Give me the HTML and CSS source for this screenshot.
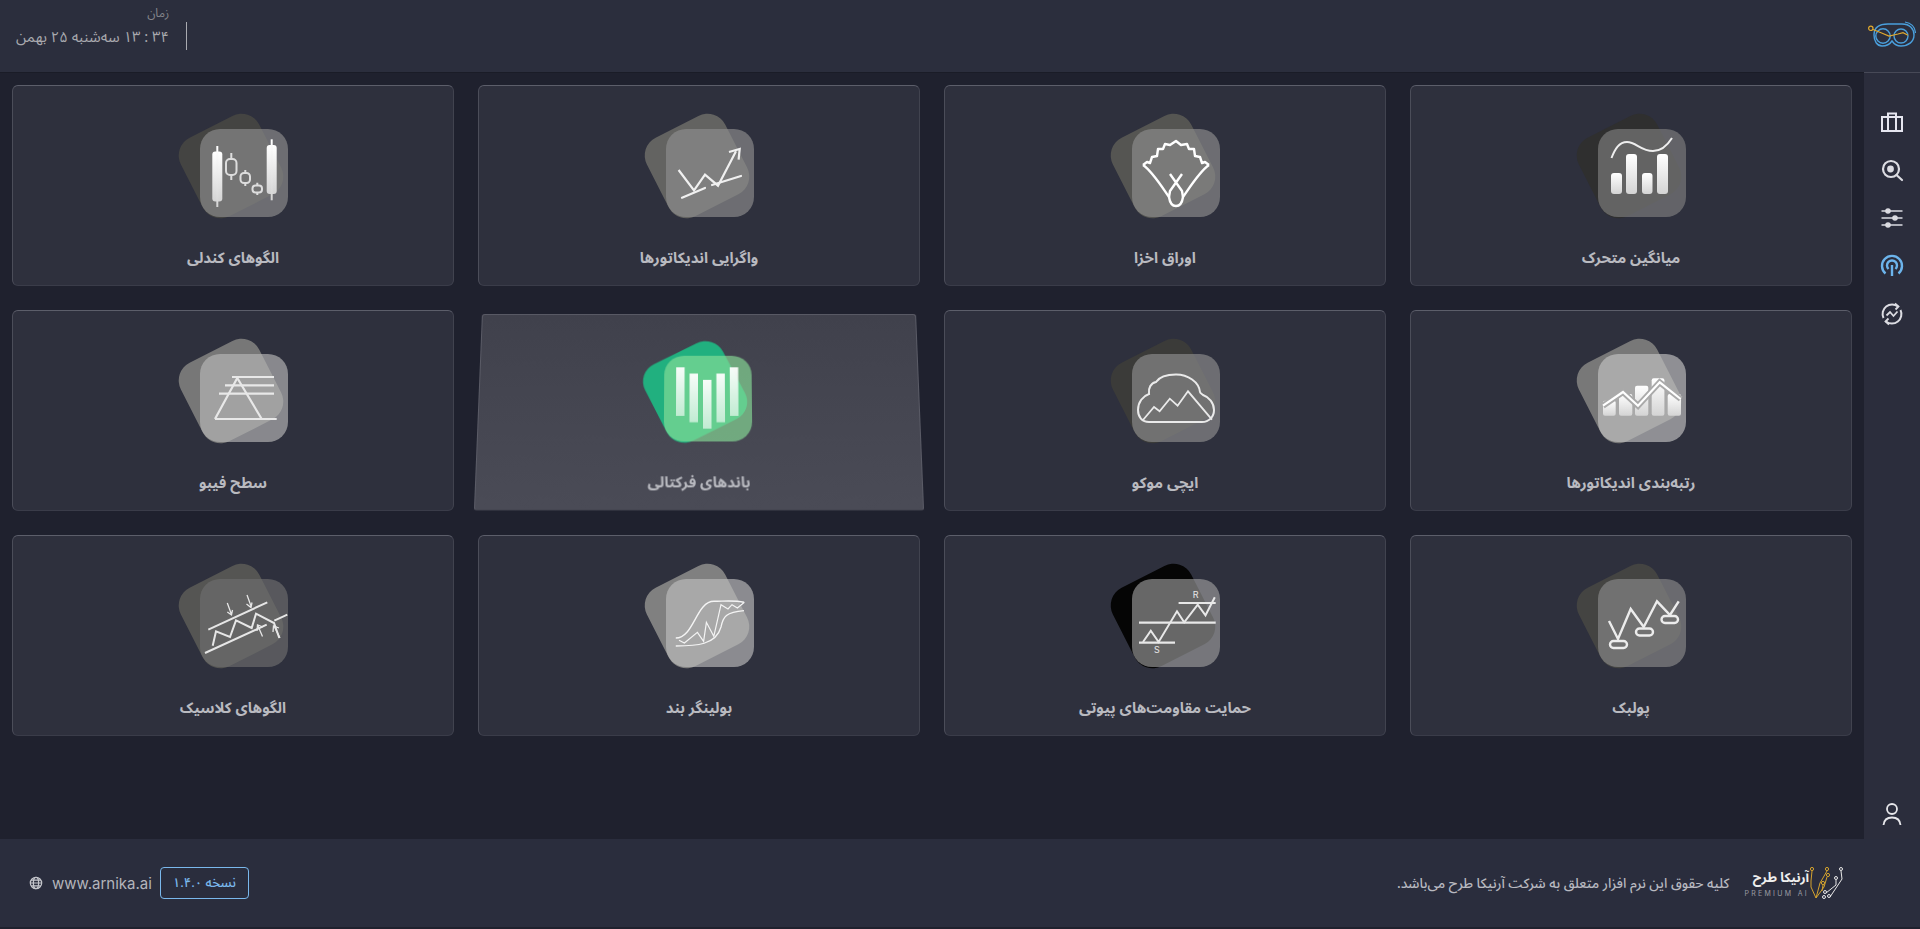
FILE: index.html
```html
<!DOCTYPE html>
<html lang="fa" dir="rtl">
<head>
<meta charset="utf-8">
<title>آرنیکا</title>
<link rel="stylesheet" href="styles.css">
</head>
<body>
<svg class="defs" width="0" height="0" aria-hidden="true">
  <defs>
    <linearGradient id="g" x1="0" y1="0" x2="0" y2="1">
      <stop offset="0" stop-color="#fff"/>
      <stop offset="1" stop-color="#d4d4d4"/>
    </linearGradient>
    <linearGradient id="f" x1="0" y1="0" x2="0" y2="1">
      <stop offset="0" stop-color="#fff" stop-opacity=".95"/>
      <stop offset="1" stop-color="#fff" stop-opacity=".6"/>
    </linearGradient>
  </defs>
</svg>
<header class="top">
  <svg class="brand" viewBox="0 0 48 27" fill="none">
    <path d="M6 14C6 6 12 3 20 3H34C42 3 46 8 46 14C46 21 40 25 33 25C29 25 26 23 24 20C22 23 18 25 14 25C9 25 6 20 6 14Z" stroke="#4a9fdc" stroke-width="1.4"/>
    <circle cx="15" cy="15" r="7.2" stroke="#4a9fdc" stroke-width="1.4"/>
    <circle cx="33" cy="15" r="7" stroke="#4a9fdc" stroke-width="1.4"/>
    <path d="M37 1C43 2 47 6 47.5 12" stroke="#4a9fdc" stroke-width="1.2"/>
    <circle cx="2.8" cy="7.3" r="2.2" stroke="#e0a92e" stroke-width="1.2"/>
    <path d="M5 8.5L13 11.7L21 15L30 13L35 11.7L40 14.3" stroke="#e0a92e" stroke-width="1.2"/>
  </svg>
  <div class="clock">
    <div class="clock__label">زمان</div>
    <div class="clock__value">۳۴ : ۱۳ سه‌شنبه ۲۵ بهمن</div>
  </div>
</header>
<div class="middle">
  <nav class="rail">
    <svg class="rail__icon" viewBox="0 0 24 24" fill="none" stroke="#e6e6f0" stroke-width="2"><rect x="2" y="7" width="20" height="14"/><path d="M8 7V3.500H16V7M8 7V21M16 7V21"/></svg>
    <svg class="rail__icon" viewBox="0 0 24 24" fill="none" stroke="#dcdce2" stroke-width="2.200"><circle cx="11" cy="11" r="8"/><path d="M16.500 17L22 22" stroke-linecap="round"/><circle cx="10.500" cy="11" r="3.400" fill="#dcdce2" stroke="none"/></svg>
    <svg class="rail__icon" viewBox="0 0 24 24" fill="#dcdce2" stroke="#dcdce2" stroke-width="1.600"><path d="M1.500 5H22.500M1.500 12H22.500M1.500 19H22.500"/><circle cx="8" cy="5" r="2"/><circle cx="15" cy="12" r="2"/><circle cx="8" cy="19" r="2"/></svg>
    <svg class="rail__icon" viewBox="0 0 24 24" fill="none" stroke="#6cb4ec" stroke-width="2.400"><path d="M5.500 19.500A10 10 0 1 1 18.500 19.500"/><path d="M8.500 15A5 5 0 1 1 15.500 15"/><path d="M12 11V22"/></svg>
    <svg class="rail__icon" viewBox="0 0 24 24" fill="none" stroke="#dcdce2" stroke-width="2"><path d="M3.500 16A9.500 9.500 0 0 1 18 4.500M20.500 8A9.500 9.500 0 0 1 6 19.500"/><path d="M6.500 13.500L10 10L13.500 14L17.500 9.500" stroke-width="1.800"/><path d="M15 1.500L18.500 4.500L15.500 7.500M9 22.500L5.500 19.500L8.500 16.500" stroke-width="1.800"/></svg>
    <svg class="rail__icon rail__icon--user" viewBox="0 0 24 24" fill="none" stroke="#e6e6ea" stroke-width="1.800"><circle cx="12" cy="7" r="5"/><path d="M3.500 23C4 18 7.500 15.500 12 15.500S20 18 20.500 23"/></svg>
  </nav>
  <main class="grid">

    <a class="card tone-moving">
      <span class="icon"><span class="icon__back"></span><span class="icon__front">
        <svg viewBox="0 0 88 88" fill="none"><g fill="url(#g)"><rect x="13" y="44" width="11" height="21" rx="3"/><rect x="28" y="25" width="11" height="40" rx="3"/><rect x="44" y="44" width="10.500" height="21" rx="3"/><rect x="59" y="25" width="11" height="40" rx="3"/></g><path d="M13.500 29C17 20 21 13 29 13C38 13 43 22 55 22C63 22 69 17 74 9" stroke="#eee" stroke-width="2"/></svg>
      </span></span>
      <span class="card__label">میانگین متحرک</span>
    </a>

    <a class="card tone-oragh">
      <span class="icon"><span class="icon__back"></span><span class="icon__front">
        <svg viewBox="0 0 88 88" fill="none" stroke="#fff" stroke-width="2.400" stroke-linejoin="round"><path d="M11 36L15 33L18 34L20 28L25 27L26 20L31 20L33 15L38 16L44 12L49 16L55 15L57 20L62 20L63 27L68 28L70 34L73 33L77 36"/><path d="M11 36C20 42 30 58 37 68C38 75 41 77 44 77C47 77 50 75 51 68C58 58 68 42 77 36"/><path d="M38 45L50 62L51 68M50 45L38 62L37 68"/></svg>
      </span></span>
      <span class="card__label">اوراق اخزا</span>
    </a>

    <a class="card tone-diverge">
      <span class="icon"><span class="icon__back"></span><span class="icon__front">
        <svg viewBox="0 0 88 88" fill="none" stroke="#f0f0f0" stroke-width="2.200"><path d="M16 68.700L39 59M46 56L75 47" stroke-linecap="round"/><path d="M12.600 41L28 61.300L39 45.700L52 56.700L70 22.300"/><path d="M63 23L73.700 20L72.600 30.700"/></svg>
      </span></span>
      <span class="card__label">واگرایی اندیکاتورها</span>
    </a>

    <a class="card tone-candle">
      <span class="icon"><span class="icon__back"></span><span class="icon__front">
        <svg viewBox="0 0 88 88" fill="none"><g fill="url(#g)"><rect x="12.300" y="22.500" width="10" height="50" rx="3"/><rect x="16.300" y="17" width="2" height="61"/><rect x="66.700" y="16" width="10" height="49" rx="3"/><rect x="70.700" y="10.300" width="2" height="61"/></g><g stroke="#ddd" stroke-width="2"><rect x="26" y="30" width="10.500" height="16" rx="4"/><path d="M31.300 24V30M31.300 46V51"/><rect x="40.500" y="44" width="9.500" height="10" rx="3.500"/><path d="M45.300 41V44M45.300 54V57"/><rect x="52.500" y="56.500" width="9.500" height="7" rx="3"/><path d="M57.300 53.700V56.500M57.300 63.500V66"/></g></svg>
      </span></span>
      <span class="card__label">الگوهای کندلی</span>
    </a>

    <a class="card tone-rank">
      <span class="icon"><span class="icon__back"></span><span class="icon__front">
        <svg viewBox="0 0 88 88" fill="none"><g fill="url(#g)"><rect x="5" y="46.700" width="12.700" height="15" rx="2"/><rect x="21" y="40" width="13.300" height="21.700" rx="2"/><rect x="37" y="31.700" width="13.300" height="30" rx="2"/><rect x="53.700" y="24.300" width="12.700" height="37.400" rx="2"/><rect x="69.700" y="40" width="13.300" height="21.700" rx="2"/></g><path d="M5 51.700L25 38L40 51.700L61.700 28.300L82.700 45" stroke="#aaa" stroke-width="6"/><path d="M5 51.700L25 38L40 51.700L61.700 28.300L82.700 45" stroke="#fff" stroke-width="2.200"/></svg>
      </span></span>
      <span class="card__label">رتبه‌بندی اندیکاتورها</span>
    </a>

    <a class="card tone-ichi">
      <span class="icon"><span class="icon__back"></span><span class="icon__front">
        <svg viewBox="0 0 88 88" fill="none" stroke="#eaeaea" stroke-width="2"><path d="M17 68C10 68 6 63 6 56C6 48 11 42 17 40C16 34 19 29 24 28C28 22 36 20.500 44 20.500C56 20.500 67 28 68 38C68 39 70 40 71 41C77 43 82 49 82 56C82 63 77 68 70 68Z"/><path d="M11 66L22 53L27.600 57.300L37.800 44.700L45.600 51.700L56 37.300L80 65.700" stroke-width="1.800"/></svg>
      </span></span>
      <span class="card__label">ایچی موکو</span>
    </a>

    <a class="card card--active tone-fractal">
      <span class="icon"><span class="icon__back"></span><span class="icon__front">
        <svg viewBox="0 0 88 88" fill="url(#f)"><rect x="12" y="12" width="8.500" height="50"/><rect x="25.500" y="18.500" width="8.500" height="50"/><rect x="39" y="25" width="8.500" height="50"/><rect x="52.500" y="18.500" width="8.500" height="50"/><rect x="66" y="12" width="8.500" height="50"/></svg>
      </span></span>
      <span class="card__label">باندهای فرکتالی</span>
    </a>

    <a class="card tone-fibo">
      <span class="icon"><span class="icon__back"></span><span class="icon__front">
        <svg viewBox="0 0 88 88" fill="none" stroke="#e8e8e8" stroke-width="2.200"><path d="M32 23H74M25 31.300H74M19 39.700H74M15 65H76.700"/><path d="M37.300 24L15 65M37.300 24L61.700 65"/></svg>
      </span></span>
      <span class="card__label">سطح فیبو</span>
    </a>

    <a class="card tone-pull">
      <span class="icon"><span class="icon__back"></span><span class="icon__front">
        <svg viewBox="0 0 88 88" fill="none" stroke="#ececec" stroke-width="2.400"><path d="M11 42L20 60L32.700 30L45.700 48L59 22.300L72 36L80.700 22.300"/><rect x="12" y="62" width="17" height="7" rx="3.500"/><rect x="38" y="49.500" width="17" height="7" rx="3.500"/><rect x="63.500" y="37" width="16.500" height="7" rx="3.500"/></svg>
      </span></span>
      <span class="card__label">پولبک</span>
    </a>

    <a class="card tone-pivot">
      <span class="icon"><span class="icon__back"></span><span class="icon__front">
        <svg viewBox="0 0 88 88" fill="none" stroke="#e8e8e8" stroke-width="2"><path d="M46.600 24H83.700M7 43.700H83.700M7 63.700H43" stroke-width="2.200"/><path d="M11 63L18.800 51.700L26.600 63L45 32.300L52.200 43.300L65.700 25.700L73.500 36.300L82.800 18.300"/><text class="pivot-mark" x="63.700" y="18.500" fill="#e8e8e8" stroke="none" text-anchor="middle">R</text><text class="pivot-mark" x="24.900" y="74" fill="#e8e8e8" stroke="none" text-anchor="middle">S</text></svg>
      </span></span>
      <span class="card__label">حمایت مقاومت‌های پیوتی</span>
    </a>

    <a class="card tone-boll">
      <span class="icon"><span class="icon__back"></span><span class="icon__front">
        <svg viewBox="0 0 88 88" fill="none" stroke="#f4f4f4" stroke-width="1.400"><path d="M9.800 59C28 59 30 22.300 48 22.300C58 22.300 68 21 78 23.300"/><path d="M9.800 67C30 67 50 66 55 48C57 38 60 33 78 31.700" stroke-width="1.300"/><path d="M13 61.300L18.400 64L31.400 53.300L37.600 62.300L40.400 43.300L47.800 57.300L55 25.700L62 30L66 25.700L71.400 29L78.400 23.300" stroke-width="1.200"/></svg>
      </span></span>
      <span class="card__label">بولینگر بند</span>
    </a>

    <a class="card tone-classic">
      <span class="icon"><span class="icon__back"></span><span class="icon__front">
        <svg viewBox="0 0 88 88" fill="none" stroke="#e6e6e6" stroke-width="2"><path d="M8.300 50.700L67.300 23.300M5 74L66.700 45.700M74.300 41.700L87.300 35.700"/><path d="M12.700 66.700L16 52.300L30 58L36 41.300L51.700 49L56 34.700L74 44L79.300 59"/><g stroke-width="1.300"><path d="M27.300 24L31.300 35M27.300 33L31.500 36L32.500 31M47 16L51 27M46.500 25L51 28.500L52 23.500M62.500 57.500L58 47M57 52L57.500 46L63 48M80 59L74.500 48M73 53L73.500 47L79 49"/></g></svg>
      </span></span>
      <span class="card__label">الگوهای کلاسیک</span>
    </a>

  </main>
</div>
<footer class="bottom">
  <div class="legal">
    <div class="maker" dir="ltr">
      <div class="maker__words">
        <span class="maker__name" dir="rtl">آرنیکا طرح</span>
        <span class="maker__tag">PREMIUM AI</span>
      </div>
      <svg class="maker__mark" viewBox="0 0 33 33" fill="none" stroke-width="1"><g stroke="#d4a32f"><circle cx="2" cy="2" r="1.600"/><circle cx="17" cy="2" r="1.600"/><circle cx="18" cy="8" r="1.600"/><circle cx="13" cy="16" r="1.600"/><path d="M1 20V14L2 4M1 20L6 31L14 20L17 10M6 31L10 16L17 4M13 18L12 24"/></g><g stroke="#e8e8e8"><circle cx="31" cy="2" r="1.500"/><circle cx="26" cy="11" r="1.500"/><circle cx="15" cy="25" r="1.500"/><circle cx="14" cy="30" r="1.500"/><circle cx="19" cy="29" r="1.500"/><path d="M31 4L32 12L20 30M26 13V18L16 26"/></g></svg>
    </div>
    <span class="legal__text">کلیه حقوق این نرم افزار متعلق به شرکت آرنیکا طرح می‌باشد.</span>
  </div>
  <div class="meta">
    <span class="version">نسخه ۱.۴.۰</span>
    <span class="site" dir="ltr">
      <svg class="site__globe" viewBox="0 0 16 16" fill="none" stroke="#c4c5cb" stroke-width="1.400"><circle cx="8" cy="8" r="6.500"/><ellipse cx="8" cy="8" rx="3" ry="6.500"/><path d="M1.500 8H14.500M2.500 4.800H13.500M2.500 11.200H13.500"/></svg>
      <span>www.arnika.ai</span>
    </span>
  </div>
</footer>
</body>
</html>
```
FILE: styles.css
```css
* { box-sizing: border-box; }

html, body { height: 100%; }

body {
  margin: 0;
  display: flex;
  flex-direction: column;
  height: 929px;
  overflow: hidden;
  background: #1f212e;
  font-family: "Noto Sans Arabic", "Noto Sans", "DejaVu Sans", sans-serif;
  color: #b9bac0;
}

.defs { position: absolute; }

.top {
  flex: none;
  height: 73px;
  display: flex;
  justify-content: space-between;
  align-items: flex-start;
  padding: 0 4px 0 16px;
  background: #2b2e3d;
  border-bottom: 1px solid #1a1c27;
}

.brand { width: 48px; height: 27px; margin-top: 21px; }

.clock {
  margin-top: 5px;
  padding-right: 18px;
  position: relative;
}

.clock::after {
  content: "";
  position: absolute;
  right: 0;
  top: 17px;
  width: 1px;
  height: 28px;
  background: #a9aab0;
}

.clock__label {
  font-size: 12px;
  line-height: 18px;
  color: #85868c;
}

.clock__value {
  font-size: 14.850px;
  line-height: 24px;
  margin-top: 3px;
  color: #a8a9ae;
  white-space: nowrap;
}

.middle {
  flex: 1;
  min-height: 0;
  display: flex;
}

.rail {
  flex: none;
  width: 56px;
  display: flex;
  flex-direction: column;
  align-items: center;
  gap: 24px;
  padding: 37px 0 13px;
  background: #2b2d3c;
  border-top: 1px solid #474957;
  margin-top: -1px;
}

.rail__icon { width: 24px; height: 24px; flex: none; }
.rail__icon--user { margin-top: auto; }

.grid {
  flex: 1;
  min-width: 0;
  display: grid;
  grid-template-columns: repeat(4, 1fr);
  grid-auto-rows: 201px;
  gap: 24px;
  align-content: start;
  padding: 12px 12px 0 12px;
}

.card {
  display: flex;
  flex-direction: column;
  align-items: center;
  padding-top: 43px;
  background: #2e303d;
  border: 1px solid #3a3c49;
  border-top-color: #5c5e6a;
  border-left-color: #4b4d59;
  border-right-color: #41434f;
  border-radius: 6px;
}

.card--active {
  background: linear-gradient(180deg, #40414c, #4a4b56);
  border-color: #5a5b66;
  border-bottom-color: transparent;
  border-radius: 3px;
  transform: perspective(1150px) rotateX(12deg);
}

.card--active .icon { transform: translateX(-2px); }

.icon {
  position: relative;
  width: 110px;
  height: 88px;
  flex: none;
  display: block;
}

.icon__back {
  position: absolute;
  left: 9px;
  top: -7px;
  width: 88px;
  height: 88px;
  border-radius: 20px;
  transform: rotate(-27deg);
  background: var(--back);
}

.icon__front {
  position: absolute;
  right: 0;
  top: 0;
  width: 88px;
  height: 88px;
  border-radius: 20px;
  background: var(--front);
}

.icon__front svg { display: block; width: 88px; height: 88px; }

.pivot-mark { font-family: "Inter", sans-serif; font-size: 9px; }

.card__label {
  margin-top: 30px;
  font-size: 15px;
  line-height: 22px;
  font-weight: 700;
  color: #b9bac0;
  white-space: nowrap;
}

.tone-candle  { --back: #444442; --front: rgba(143, 143, 143, .65); }
.tone-diverge { --back: #636361; --front: rgba(143, 143, 143, .65); }
.tone-oragh   { --back: #555552; --front: rgba(143, 143, 143, .65); }
.tone-moving  { --back: #2f2f2f; --front: rgba(128, 128, 128, .65); }
.tone-fibo    { --back: #777777; --front: rgba(185, 185, 185, .65); }
.tone-fractal { --back: #21b07f; --front: rgba(137, 223, 152, .65); }
.tone-ichi    { --back: #3b3b39; --front: rgba(143, 143, 143, .65); }
.tone-rank    { --back: #787878; --front: rgba(195, 195, 195, .65); }
.tone-classic { --back: #555553; --front: rgba(111, 111, 111, .65); }
.tone-boll    { --back: #808080; --front: rgba(189, 189, 189, .65); }
.tone-pivot   { --back: #050505; --front: rgba(157, 157, 157, .65); }
.tone-pull    { --back: #444442; --front: rgba(138, 138, 138, .65); }

.bottom {
  flex: none;
  height: 88px;
  margin-bottom: 2px;
  display: flex;
  justify-content: space-between;
  align-items: center;
  padding: 0 77px 0 29px;
  background: #2a2d3d;
}

.legal {
  display: flex;
  align-items: center;
  gap: 15px;
}

.maker {
  display: flex;
  align-items: center;
  gap: 1px;
}

.maker__words {
  display: flex;
  flex-direction: column;
  align-items: flex-end;
}

.maker__name {
  font-size: 13px;
  line-height: 21px;
  font-weight: 700;
  color: #eeeeee;
  white-space: nowrap;
}

.maker__tag {
  font-family: "Inter", sans-serif;
  font-size: 7px;
  line-height: 10px;
  letter-spacing: 2.300px;
  color: #9b9ca3;
  white-space: nowrap;
}

.maker__mark { width: 33px; height: 33px; }

.legal__text {
  font-size: 13.700px;
  font-weight: 500;
  color: #b8b9c0;
  white-space: nowrap;
}

.meta {
  display: flex;
  align-items: center;
  gap: 8px;
}

.version {
  height: 32px;
  width: 89px;
  display: flex;
  align-items: center;
  justify-content: center;
  border: 1px solid #7ab8ec;
  border-radius: 4px;
  font-size: 13px;
  font-weight: 500;
  color: #7ab8ec;
  white-space: nowrap;
}

.site {
  display: flex;
  align-items: center;
  gap: 9px;
  font-family: "Inter", sans-serif;
  font-size: 15px;
  color: #b4b5bb;
}

.site__globe { width: 14px; height: 14px; }
```
